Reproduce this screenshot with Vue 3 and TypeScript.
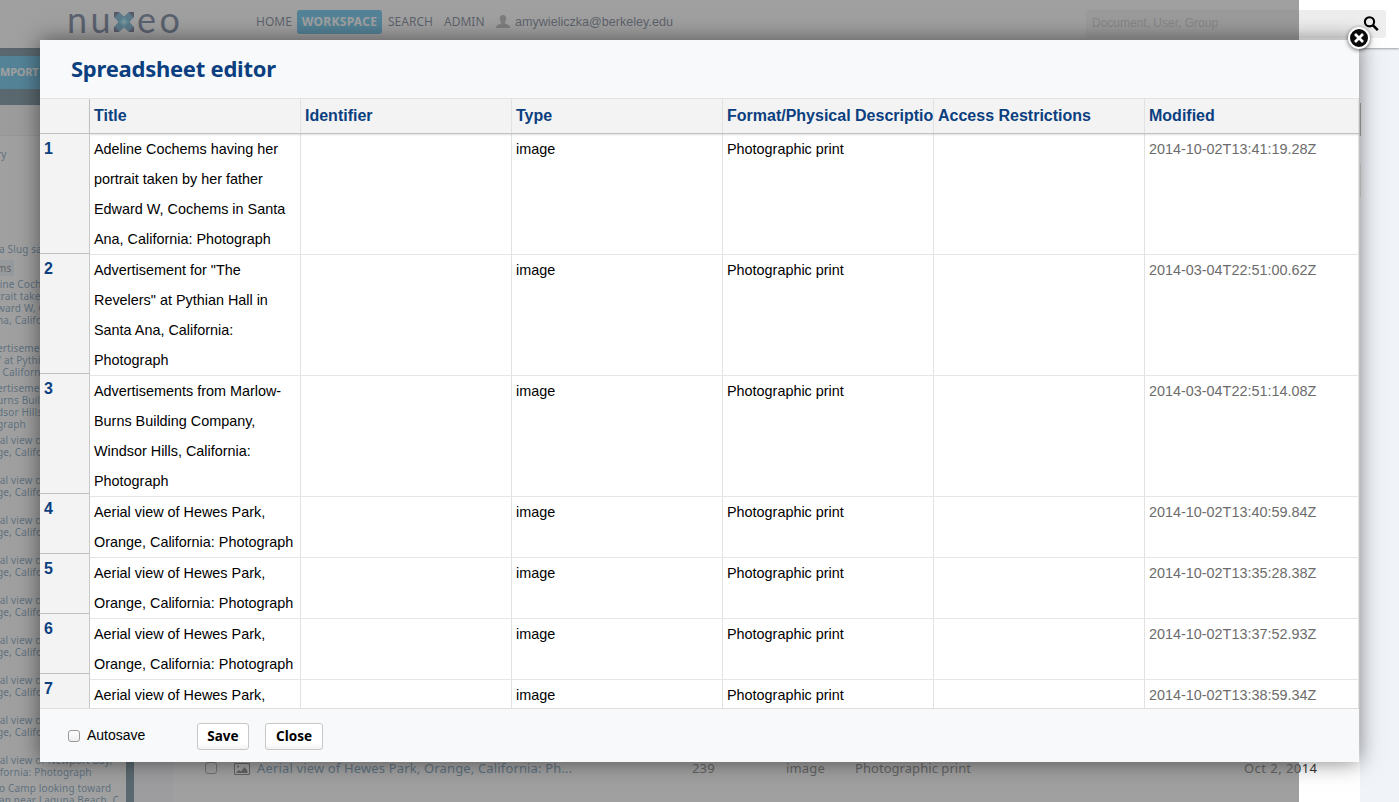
<script setup lang="ts">
interface Row { title: string[]; modified: string }
interface TreeGroup { lines: string[]; height: number; active?: boolean; flush?: boolean }

const columns: string[] = ['Title', 'Identifier', 'Type', 'Format/Physical Description', 'Access Restrictions', 'Modified']

const hewes = ['Aerial view of Hewes Park,', 'Orange, California: Photograph']
const rows: Row[] = [
  { title: ['Adeline Cochems having her', 'portrait taken by her father', 'Edward W, Cochems in Santa', 'Ana, California: Photograph'], modified: '2014-10-02T13:41:19.28Z' },
  { title: ['Advertisement for "The', 'Revelers" at Pythian Hall in', 'Santa Ana, California:', 'Photograph'], modified: '2014-03-04T22:51:00.62Z' },
  { title: ['Advertisements from Marlow-', 'Burns Building Company,', 'Windsor Hills, California:', 'Photograph'], modified: '2014-03-04T22:51:14.08Z' },
  { title: hewes, modified: '2014-10-02T13:40:59.84Z' },
  { title: hewes, modified: '2014-10-02T13:35:28.38Z' },
  { title: hewes, modified: '2014-10-02T13:37:52.93Z' },
  { title: hewes.slice(0, 1), modified: '2014-10-02T13:38:59.34Z' },
]

const aerial = (): TreeGroup => ({ lines: ['ial view of', 'ge, Califor'], height: 40 })
const tree: TreeGroup[] = [
  { lines: ['ry'], height: 95 },
  { lines: ['a Slug sa'], height: 19, flush: true },
  { lines: ['ms'], height: 16, active: true },
  { lines: ['line Coch', 'trait take', 'ward W, C', 'na, Califo'], height: 64 },
  { lines: ['ertiseme', '" at Pythi', ', Californ'], height: 40 },
  { lines: ['ertiseme', 'urns Buil', 'dsor Hills', 'graph'], height: 52 },
  ...Array.from({ length: 8 }, aerial),
  { lines: ['ial view of Newport Bay,', 'ifornia: Photograph'], height: 28 },
  { lines: ['o Camp looking toward', 'an near Laguna Beach, C'], height: 28, flush: true },
]
</script>

<template>
  <div class="screen">
    <div class="page">
      <header class="topbar">
        <div class="logo">
          <span class="word first">nu</span>
          <svg class="mark" width="22" height="22" viewBox="0 0 22 22">
            <path d="M1 1h5l5 4.500L16 1h5v5l-4.500 5 4.500 5v5h-5l-5-4.500L6 21H1v-5l4.500-5L1 6z" fill="#1c7fb4" />
            <path d="M1 1h5.500L1 6.500zM15.500 1H21v5.500zM1 15.500L6.500 21H1zM21 15.500V21h-5.500z" fill="#15134a" />
            <path d="M11 5.500l2.800 2.700L11 11 8.200 8.200zM5.500 11l2.700-2.800L11 11l-2.800 2.800zM16.500 11l-2.700 2.800L11 11l2.800-2.800zM11 16.500l-2.800-2.700L11 11l2.800 2.800z" fill="#1fb0dc" />
            <path d="M11 8l3 3-3 3-3-3z" fill="#7fd4ee" />
          </svg>
          <span class="word">eo</span>
        </div>
        <nav class="nav">
          <span class="n-home">HOME</span>
          <span class="n-work">WORKSPACE</span>
          <span class="n-search">SEARCH</span>
          <span class="n-admin">ADMIN</span>
        </nav>
        <div class="user">
          <svg width="14" height="13" viewBox="0 0 14 13"><path d="M7 0c2.300 0 3.500 1.500 3.300 3.700C10.200 5.400 9.500 6.500 8.800 7.200v1.200c1.800.8 5.200 1.300 5.200 4.600H0c0-3.300 3.400-3.800 5.200-4.600V7.200C4.500 6.500 3.800 5.400 3.700 3.700 3.500 1.500 4.700 0 7 0z" fill="#8c8c8c" /></svg>
          <span>amywieliczka@berkeley.edu</span>
        </div>
        <div class="search">
          <span>Document, User, Group</span>
          <svg width="18" height="18" viewBox="0 0 18 18" fill="none" stroke="#000"><circle cx="7.500" cy="6.800" r="4.600" stroke-width="2.100" /><path d="M10.800 10.200l5 5" stroke-width="2.600" /></svg>
        </div>
      </header>
      <div class="actions"><span class="import">MPORT</span></div>
      <div class="crumbs"></div>
      <div class="main">
        <aside class="tree">
          <div v-for="(g, i) in tree" :key="i" class="group" :class="{ active: g.active, flush: g.flush }" :style="{ height: g.height + 'px' }">
            <div v-for="(l, j) in g.lines" :key="j" class="tline"><span>{{ l }}</span></div>
          </div>
        </aside>
        <div class="splitter"></div>
        <div class="gutter"></div>
        <section class="listing">
          <div class="doc">
            <span class="box"></span>
            <svg class="pic" width="16" height="12" viewBox="0 0 16 12"><path d="M.5.500h15v11H.500z" fill="none" stroke="#333" /><path d="M2.500 10V9L5 7l2 1.500L10.500 4l3 4v2z" fill="#333" /><circle cx="4" cy="3.500" r="1" fill="#333" /></svg>
            <span class="d-title">Aerial view of Hewes Park, Orange, California: Ph...</span>
            <span class="d-num">239</span>
            <span class="d-type">image</span>
            <span class="d-format">Photographic print</span>
            <span class="d-date">Oct 2, 2014</span>
          </div>
        </section>
        <div class="edge"><i class="tab-a"></i><i class="tab-b"></i></div>
      </div>
    </div>

    <div class="veil"></div>

    <div class="dialog">
      <h1>Spreadsheet editor</h1>
      <div class="sheet">
        <div class="rowheads">
          <div class="corner"></div>
          <div v-for="(r, i) in rows" :key="i" class="rh" :style="{ height: r.title.length * 30 + 'px' }">{{ i + 1 }}</div>
        </div>
        <div class="grid">
          <div class="row head">
            <div v-for="c in columns" :key="c" class="cell">{{ c }}</div>
          </div>
          <div v-for="(r, i) in rows" :key="i" class="row">
            <div class="cell"><div v-for="(t, j) in r.title" :key="j">{{ t }}</div></div>
            <div class="cell"></div>
            <div class="cell">image</div>
            <div class="cell">Photographic print</div>
            <div class="cell"></div>
            <div class="cell dim">{{ r.modified }}</div>
          </div>
        </div>
      </div>
      <footer class="foot">
        <span class="check"></span>
        <span class="auto">Autosave</span>
        <span class="btn save">Save</span>
        <span class="btn close">Close</span>
      </footer>
      <svg class="dismiss" width="30" height="30" viewBox="0 0 30 30">
        <circle cx="15" cy="14" r="10" fill="#0a0a0a" stroke="#fff" stroke-width="2" />
        <path d="M11 10l8 8M19 10l-8 8" stroke="#fff" stroke-width="2.700" />
      </svg>
    </div>
  </div>
</template>

<style>
body { margin: 0; }
</style>

<style scoped>
.screen { position: relative; width: 1399px; height: 802px; overflow: hidden; font-family: "Liberation Sans", Arial, sans-serif; }
.page { display: flex; flex-direction: column; height: 802px; background: #f0f3f8; }
.topbar { position: relative; z-index: 1; display: flex; flex: none; height: 48px; background: #fff; box-shadow: 0 1px 2px rgba(0,0,0,.35); font-family: "Noto Sans", sans-serif; font-size: 12px; color: #1b3050; white-space: nowrap; }
.logo { display: flex; width: 189px; padding-left: 67px; color: #17305f; }
.word { font: 400 36px/38px Lato, sans-serif; letter-spacing: 3.5px; height: 40px; margin-top: 0; }
.first { width: 46px; }
.mark { flex: none; margin: 11px 2px 0 0; }
.nav { display: flex; width: 240px; line-height: 24px; padding-top: 10px; height: 24px; }
.n-home { width: 41px; }
.n-work { width: 85px; text-align: center; background: #009fe0; border-radius: 3px; color: #fff; font-weight: 700; letter-spacing: .3px; }
.n-search { margin-left: 6px; width: 56px; }
.n-admin { width: 50px; }
.user { display: flex; align-items: flex-start; padding-top: 15px; font: 12.58px/14px "Liberation Sans", Arial, sans-serif; }
.user svg { margin-right: 5px; }
.search { box-sizing: border-box; display: flex; justify-content: space-between; margin-left: auto; margin-right: 13px; margin-top: 10px; width: 300px; height: 28px; padding: 5px 6px 0; background: #eee; border-radius: 2px; font: 12px/16px "Liberation Sans", Arial, sans-serif; color: #a8a8a8; }
.actions { box-sizing: border-box; flex: none; width: 1350px; height: 57px; padding-top: 8px; background: #17455c; }
.import { display: block; width: 200px; height: 33px; background: #009fe0; color: #fff; font: 700 11px/32px "Noto Sans", sans-serif; letter-spacing: -.2px; }
.crumbs { box-sizing: border-box; flex: none; width: 1350px; height: 31px; background: #f0f0f0; border-bottom: 1px solid #ddd; }
.main { display: flex; flex: 1; min-height: 0; }
.tree { width: 126px; padding-top: 12px; background: #fff; overflow: hidden; font: 10px/12px "Noto Sans", sans-serif; letter-spacing: .15px; color: #1d5f90; white-space: nowrap; }
.group { margin-left: -3px; }
.flush { margin-left: -1px; }
.active .tline { color: #333; }
.active .tline span { display: inline-block; height: 16px; line-height: 16px; margin-top: -2px; padding-right: 3px; background: #e2ecf4; }
.splitter { width: 8px; background: #17455c; }
.gutter { width: 40px; background: #f3f6fa; }
.listing { display: flex; flex-direction: column; width: 1186px; background: #fff; }
.doc { display: flex; align-items: center; margin-top: 619px; height: 26px; padding-left: 31px; font: 13px/18px "Noto Sans", sans-serif; white-space: nowrap; color: #333; letter-spacing: .15px; }
.box { box-sizing: border-box; width: 12px; height: 12px; border: 1px solid #666; border-radius: 3px; margin-right: 17px; }
.pic { margin: 2px 7px 0 0; }
.d-title { width: 435px; color: #1d5f90; }
.d-num { width: 94px; }
.d-type { width: 69px; }
.d-format { width: 389px; letter-spacing: .05px; }
.d-date { letter-spacing: .45px; }
.edge { width: 39px; }
.tab-a { display: block; width: 1px; height: 33px; margin-top: -33px; background: #aaa; position: relative; }
.tab-b { display: block; width: 1px; height: 33px; margin-top: 28px; background: #ddd; }
.veil { position: absolute; left: 0; top: 0; width: 1299px; height: 802px; background: rgba(119,119,119,.7); z-index: 2; }

.dialog { position: absolute; z-index: 3; left: 40px; top: 40px; width: 1319px; height: 722px; display: flex; flex-direction: column; background: #f8f9fb; box-shadow: 0 0 21px rgba(0,0,0,.5); }
h1 { flex: none; box-sizing: border-box; margin: 0; height: 58px; padding-left: 31px; font: 700 22px/56px "Noto Sans", sans-serif; letter-spacing: -.25px; color: #0b3f80; white-space: nowrap; }
.sheet { box-sizing: border-box; display: flex; height: 611px; border-top: 1px solid #e3e3e3; border-bottom: 1px solid #ddd; background: #fff; overflow: hidden; }
.rowheads { flex: none; width: 49px; border-right: 1px solid #c8c8c8; background: #f3f3f3; }
.corner, .rh { box-sizing: border-box; border-bottom: 1px solid #c0c0c0; }
.corner { height: 35px; }
.rh { padding-left: 4px; font-size: 16px; line-height: 30px; font-weight: 700; color: #0b3f80; }
.rh:last-child { min-height: 60px; }
.grid { flex: 1; }
.row { display: grid; grid-template-columns: 211px 211px 211px 211px 211px 214px; border-bottom: 1px solid #e5e5e5; }
.row:last-child { min-height: 60px; }
.cell { border-right: 1px solid #e2e2e2; padding-left: 4px; font-size: 14.4px; line-height: 30px; min-height: 30px; white-space: nowrap; overflow: hidden; color: #000; }
.head { box-sizing: border-box; height: 35px; background: #f3f3f3; border-bottom-color: #c0c0c0; box-shadow: 0 1px 2px rgba(0,0,0,.12); position: relative; }
.head .cell { font-size: 16px; font-weight: 700; line-height: 33px; color: #0b3f80; }
.cell.dim { color: #6c6c6c; }
.foot { display: flex; align-items: flex-start; height: 53px; }
.check { box-sizing: border-box; width: 12px; height: 12px; margin: 21px 7px 0 28px; border: 1px solid #999; border-radius: 3px; background: linear-gradient(#fff,#eee); }
.auto { width: 110px; margin-top: 17px; font-size: 14px; line-height: 18px; color: #000; }
.btn { box-sizing: border-box; height: 27px; margin-top: 14px; border: 1px solid #c8c8c8; border-radius: 3px; background: linear-gradient(#fff 75%,#f3f3f3); text-align: center; font: 700 13.500px/25px "Noto Sans", sans-serif; color: #000; }
.save { width: 52px; }
.close { width: 58px; margin-left: 16px; }
.dismiss { position: absolute; right: -15px; top: -16px; filter: drop-shadow(0 1px 2px rgba(0,0,0,.6)); }
</style>
